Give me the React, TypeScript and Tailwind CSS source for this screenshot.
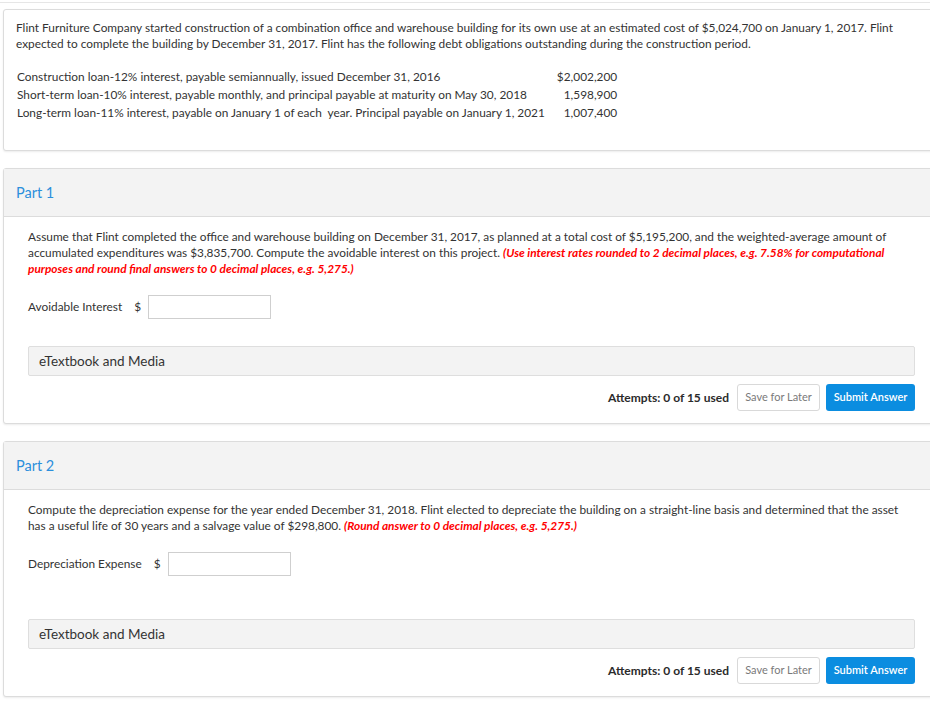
import React from 'react';

const loans = [
  ['Construction loan-12% interest, payable semiannually, issued December 31, 2016', '$2,002,200'],
  ['Short-term loan-10% interest, payable monthly, and principal payable at maturity on May 30, 2018', '1,598,900'],
  ['Long-term loan-11% interest, payable on January 1 of each  year. Principal payable on January 1, 2021', '1,007,400'],
];

function Footer() {
  return (
    <div className="mt-[8px] flex items-center justify-end">
      <span className="mr-[8px] text-[12px] font-bold text-[#2b2b2b]">Attempts: 0 of 15 used</span>
      <button className="h-[27px] w-[83px] rounded-[3px] border border-[#d9d9d9] bg-white text-[11px] text-[#7a7a7a]">
        Save for Later
      </button>
      <button className="ml-[6px] h-[27px] w-[89px] rounded-[3px] bg-[#0b8de0] text-[11px] font-semibold text-white">
        Submit Answer
      </button>
    </div>
  );
}

function Media() {
  return (
    <div className="flex h-[30px] items-center rounded-[2px] border border-[#dedede] bg-[#f3f3f3] pl-[10px] text-[13.5px] text-[#333]">
      eTextbook and Media
    </div>
  );
}

function Part({
  title,
  children,
  label,
  mediaGap,
}: {
  title: string;
  children: React.ReactNode;
  label: string;
  mediaGap: string;
}) {
  return (
    <div className="ml-[3px] w-[937px] rounded-[3px] border border-[#dcdcdc] bg-white shadow-[0_1px_2px_rgba(0,0,0,0.08)]">
      <div className="flex h-[48px] items-center border-b border-[#dcdcdc] bg-[#f3f3f3] pl-[12px] text-[14.5px] text-[#2b8fdc]">
        {title}
      </div>
      <div className="pl-[24px] pr-[24px] pt-[12px] pb-[12px]">
        <p className="text-[11.85px] leading-[16px] text-[#333]">{children}</p>
        <div className="mt-[18px] flex h-[24px] items-center text-[11.85px] text-[#333]">
          <span>{label}</span>
          <span className="ml-[12px]">$</span>
          <input className="ml-[7px] h-[24px] w-[123px] border border-[#cfcfcf] bg-white" />
        </div>
        <div className={mediaGap}>
          <Media />
        </div>
        <Footer />
      </div>
    </div>
  );
}

export default function App() {
  return (
    <div
      className="h-[708px] w-[930px] overflow-hidden bg-white"
      style={{ fontFamily: 'Lato, "Open Sans", sans-serif' }}
    >
      <div className="mt-[2px] h-[1px] bg-[#e6e6e6]" />

      {/* 問題文 */}
      <div className="ml-[3px] mt-[6px] w-[937px] rounded-[3px] border border-[#dcdcdc] bg-white pl-[12px] pr-[12px] pt-[10px] pb-[28px] shadow-[0_1px_2px_rgba(0,0,0,0.08)]">
        <p className="text-[11.85px] leading-[16px] text-[#333]">
          Flint Furniture Company started construction of a combination office and warehouse building for its own use at an estimated cost of $5,024,700 on January 1, 2017. Flint expected to complete the building by December 31, 2017. Flint has the following debt obligations outstanding during the construction period.
        </p>
        <table className="mt-[16px] ml-[1px] text-[11.85px] text-[#333]">
          <tbody>
            {loans.map(([label, amount]) => (
              <tr key={amount} className="h-[18px]">
                <td className="whitespace-pre pr-[12px]">{label}</td>
                <td className="text-right">{amount}</td>
              </tr>
            ))}
          </tbody>
        </table>
      </div>

      <div className="mt-[17px]">
        <Part title="Part 1" label="Avoidable Interest" mediaGap="mt-[27px]">
          Assume that Flint completed the office and warehouse building on December 31, 2017, as planned at a total cost of $5,195,200, and the weighted-average amount of accumulated expenditures was $3,835,700. Compute the avoidable interest on this project.{' '}
          <span className="font-bold italic text-[#f00]">
            (Use interest rates rounded to 2 decimal places, e.g. 7.58% for computational purposes and round final answers to 0 decimal places, e.g. 5,275.)
          </span>
        </Part>
      </div>

      <div className="mt-[17px]">
        <Part title="Part 2" label="Depreciation Expense" mediaGap="mt-[43px]">
          Compute the depreciation expense for the year ended December 31, 2018. Flint elected to depreciate the building on a straight-line basis and determined that the asset has a useful life of 30 years and a salvage value of $298,800.{' '}
          <span className="font-bold italic text-[#f00]">(Round answer to 0 decimal places, e.g. 5,275.)</span>
        </Part>
      </div>
    </div>
  );
}
